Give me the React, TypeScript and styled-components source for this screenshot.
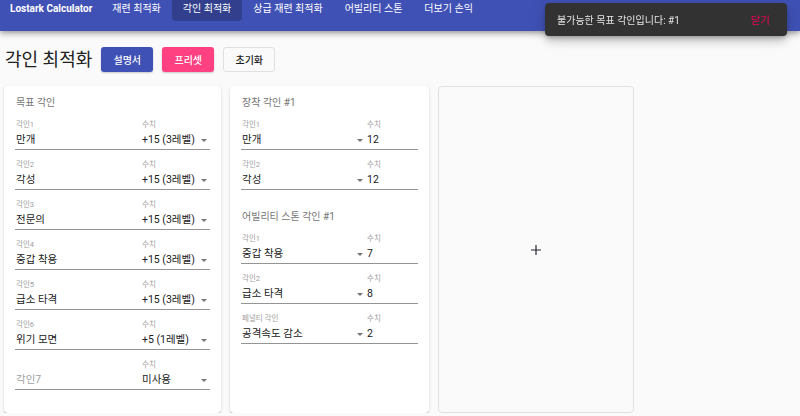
import React from 'react';
import styled, { createGlobalStyle } from 'styled-components';

const GlobalStyle = createGlobalStyle`
  body {
    margin: 0;
    background-color: #fafafa;
    font-family: Roboto, "Noto Sans CJK KR", sans-serif;
    color: rgba(0, 0, 0, 0.87);
  }
`;

const AppBar = styled.header`
  height: 31px;
  background-color: #3f51b5;
  box-shadow: 0 2px 4px -1px rgba(0,0,0,0.2), 0 4px 5px 0 rgba(0,0,0,0.14), 0 1px 10px 0 rgba(0,0,0,0.12);
  display: flex;
  align-items: flex-start;
  padding-left: 10px;
  position: relative;
  z-index: 2;
`;

const Brand = styled.div`
  color: white;
  font-size: 10px;
  font-weight: 700;
  line-height: 17px;
  margin-right: 9px;
`;

const Tab = styled.div<{ $active?: boolean }>`
  color: white;
  font-size: 10px;
  line-height: 17px;
  height: 21px;
  padding: 0 11px;
  border-radius: 0 0 4px 4px;
  background-color: ${p => (p.$active ? 'rgba(0,0,0,0.22)' : 'transparent')};
  white-space: nowrap;
`;

const Main = styled.main`
  padding: 16px 4px 0 4px;
`;

const TitleRow = styled.div`
  display: flex;
  align-items: center;
  gap: 9px;
  height: 25px;
  padding-left: 1px;
`;

const PageTitle = styled.h1`
  margin: 0;
  font-size: 18px;
  font-weight: 400;
  line-height: 25px;
  color: #212121;
`;

const Button = styled.button<{ $variant: 'primary' | 'secondary' | 'plain' }>`
  width: 52px;
  height: 25px;
  border-radius: 3px;
  font-family: inherit;
  font-size: 10px;
  font-weight: 500;
  padding: 0;
  cursor: pointer;
  border: 1px solid
    ${p => (p.$variant === 'plain' ? '#e0e0e0' : 'transparent')};
  background-color: ${p =>
    p.$variant === 'primary' ? '#3f51b5' : p.$variant === 'secondary' ? '#ff4081' : '#fafafa'};
  color: ${p => (p.$variant === 'plain' ? '#212121' : '#ffffff')};
  box-shadow: ${p => (p.$variant === 'plain' ? 'none' : '0 1px 2px rgba(0,0,0,0.2)')};
`;

const Cards = styled.div`
  display: flex;
  gap: 9px;
  margin-top: 14px;
  align-items: stretch;
`;

const Card = styled.section<{ $width: number }>`
  width: ${p => p.$width}px;
  box-sizing: border-box;
  background: #ffffff;
  border-radius: 4px;
  padding: 10px 11px 23px 11px;
  box-shadow: 0 2px 1px -1px rgba(0,0,0,0.2), 0 1px 1px 0 rgba(0,0,0,0.14), 0 1px 3px 0 rgba(0,0,0,0.12);
`;

const AddCard = styled.button`
  width: 196px;
  box-sizing: border-box;
  background: #fafafa;
  border: 1px solid #e0e0e0;
  border-radius: 4px;
  display: flex;
  align-items: center;
  justify-content: center;
  padding: 0;
  cursor: pointer;
`;

const CardTitle = styled.div<{ $spaced?: boolean }>`
  font-size: 10px;
  line-height: 14px;
  color: #757575;
  margin-top: ${p => (p.$spaced ? '20px' : '0')};
  padding-left: 1px;
`;

const Row = styled.div<{ $cols: string }>`
  display: grid;
  grid-template-columns: ${p => p.$cols};
  margin-top: 9px;
  border-bottom: 1px solid #949494;
`;

const Field = styled.div`
  display: flex;
  flex-direction: column;
  min-width: 0;
`;

const Label = styled.div`
  font-size: 7.5px;
  line-height: 11px;
  color: #9e9e9e;
  padding-left: 1px;
`;

const Value = styled.div<{ $muted?: boolean }>`
  display: flex;
  align-items: center;
  font-size: 10.5px;
  line-height: 14px;
  padding: 3px 0 2px 1px;
  color: ${p => (p.$muted ? '#9e9e9e' : '#212121')};
  white-space: nowrap;
`;

const ValueText = styled.span`
  flex: 1;
`;

const Arrow = styled.span`
  width: 0;
  height: 0;
  border-left: 3.5px solid transparent;
  border-right: 3.5px solid transparent;
  border-top: 3.5px solid #757575;
  margin-right: 3px;
`;

const Snackbar = styled.div`
  position: fixed;
  top: 3px;
  right: 13px;
  width: 242px;
  height: 33px;
  box-sizing: border-box;
  background: #323232;
  border-radius: 4px;
  display: flex;
  align-items: center;
  justify-content: space-between;
  padding: 0 17px 0 12px;
  box-shadow: 0 3px 5px -1px rgba(0,0,0,0.2), 0 6px 10px 0 rgba(0,0,0,0.14), 0 1px 18px 0 rgba(0,0,0,0.12);
  z-index: 5;
`;

const SnackText = styled.span`
  color: rgba(255, 255, 255, 0.87);
  font-size: 10px;
`;

const SnackAction = styled.span`
  color: #f50057;
  font-size: 10.5px;
`;

const targets = [
  { name: '만개', level: '+15 (3레벨)' },
  { name: '각성', level: '+15 (3레벨)' },
  { name: '전문의', level: '+15 (3레벨)' },
  { name: '중갑 착용', level: '+15 (3레벨)' },
  { name: '급소 타격', level: '+15 (3레벨)' },
  { name: '위기 모면', level: '+5 (1레벨)' },
];

const equipped = [
  { label: '각인1', name: '만개', value: '12' },
  { label: '각인2', name: '각성', value: '12' },
];

const stone = [
  { label: '각인1', name: '중갑 착용', value: '7' },
  { label: '각인2', name: '급소 타격', value: '8' },
  { label: '페널티 각인', name: '공격속도 감소', value: '2' },
];

const tabs = ['재련 최적화', '각인 최적화', '상급 재련 최적화', '어빌리티 스톤', '더보기 손익'];

const EngravingRow: React.FC<{ label: string; name: string; value: string }> = ({ label, name, value }) => (
  <Row $cols="126px 1fr">
    <Field>
      <Label>{label}</Label>
      <Value>{name}</Value>
    </Field>
    <Field>
      <Label>수치</Label>
      <Value>
        <ValueText>{value}</ValueText>
        <Arrow />
      </Value>
    </Field>
  </Row>
);

const EquipRow: React.FC<{ label: string; name: string; value: string }> = ({ label, name, value }) => (
  <Row $cols="125px 1fr">
    <Field>
      <Label>{label}</Label>
      <Value>
        <ValueText>{name}</ValueText>
        <Arrow />
      </Value>
    </Field>
    <Field>
      <Label>수치</Label>
      <Value>{value}</Value>
    </Field>
  </Row>
);

export default function App() {
  return (
    <>
      <GlobalStyle />
      <AppBar>
        <Brand>Lostark Calculator</Brand>
        {tabs.map(t => (
          <Tab key={t} $active={t === '각인 최적화'}>
            {t}
          </Tab>
        ))}
      </AppBar>
      <Main>
        <TitleRow>
          <PageTitle>각인 최적화</PageTitle>
          <Button $variant="primary">설명서</Button>
          <Button $variant="secondary">프리셋</Button>
          <Button $variant="plain">초기화</Button>
        </TitleRow>
        <Cards>
          <Card $width={217}>
            <CardTitle>목표 각인</CardTitle>
            {targets.map((t, i) => (
              <EngravingRow key={i} label={`각인${i + 1}`} name={t.name} value={t.level} />
            ))}
            <Row $cols="126px 1fr">
              <Field>
                <Label>&nbsp;</Label>
                <Value $muted>각인7</Value>
              </Field>
              <Field>
                <Label>수치</Label>
                <Value>
                  <ValueText>미사용</ValueText>
                  <Arrow />
                </Value>
              </Field>
            </Row>
          </Card>
          <Card $width={199}>
            <CardTitle>장착 각인 #1</CardTitle>
            {equipped.map((e, i) => (
              <EquipRow key={i} {...e} />
            ))}
            <CardTitle $spaced>어빌리티 스톤 각인 #1</CardTitle>
            {stone.map((e, i) => (
              <EquipRow key={i} {...e} />
            ))}
          </Card>
          <AddCard>
            <svg width="10" height="10" viewBox="0 0 10 10">
              <path d="M5 0v10M0 5h10" stroke="#2b2233" strokeWidth="1.2" />
            </svg>
          </AddCard>
        </Cards>
      </Main>
      <Snackbar>
        <SnackText>불가능한 목표 각인입니다: #1</SnackText>
        <SnackAction>닫기</SnackAction>
      </Snackbar>
    </>
  );
}
